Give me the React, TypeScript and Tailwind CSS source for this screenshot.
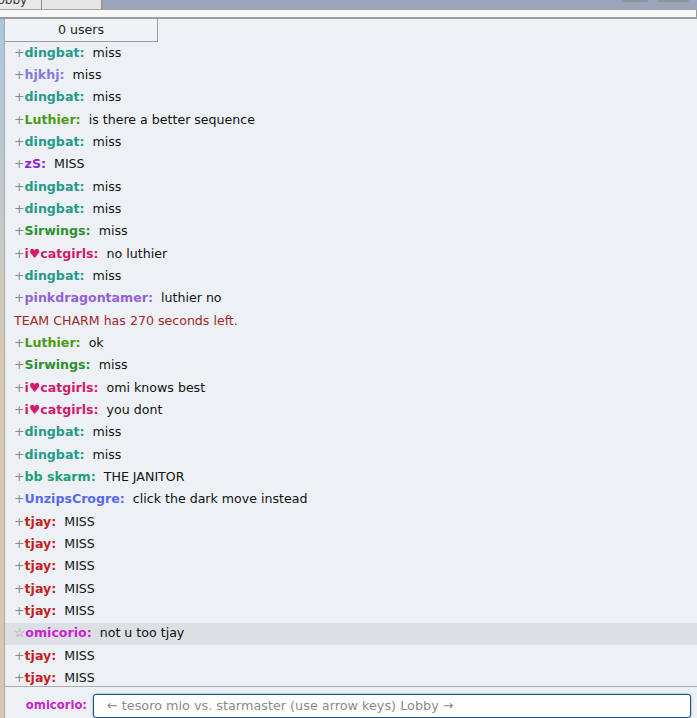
import React from 'react';

type Msg = {
  rank?: string;
  name?: string;
  color?: string;
  text: string;
  system?: boolean;
  highlight?: boolean;
};

const TEAL = 'text-[#27998a]';
const LAV = 'text-[#8579dd]';
const LUTH = 'text-[#4c9a16]';
const SIR = 'text-[#2d8f2d]';
const CAT = 'text-[#d41a6b]';
const TJAY = 'text-[#c41e1e]';

const messages: Msg[] = [
  { name: 'dingbat', color: TEAL, text: 'miss' },
  { name: 'hjkhj', color: LAV, text: 'miss' },
  { name: 'dingbat', color: TEAL, text: 'miss' },
  { name: 'Luthier', color: LUTH, text: 'is there a better sequence' },
  { name: 'dingbat', color: TEAL, text: 'miss' },
  { name: 'zS', color: 'text-[#8f25d8]', text: 'MISS' },
  { name: 'dingbat', color: TEAL, text: 'miss' },
  { name: 'dingbat', color: TEAL, text: 'miss' },
  { name: 'Sirwings', color: SIR, text: 'miss' },
  { name: 'i♥catgirls', color: CAT, text: 'no luthier' },
  { name: 'dingbat', color: TEAL, text: 'miss' },
  { name: 'pinkdragontamer', color: 'text-[#9361d6]', text: 'luthier no' },
  { text: 'TEAM CHARM has 270 seconds left.', system: true },
  { name: 'Luthier', color: LUTH, text: 'ok' },
  { name: 'Sirwings', color: SIR, text: 'miss' },
  { name: 'i♥catgirls', color: CAT, text: 'omi knows best' },
  { name: 'i♥catgirls', color: CAT, text: 'you dont' },
  { name: 'dingbat', color: TEAL, text: 'miss' },
  { name: 'dingbat', color: TEAL, text: 'miss' },
  { name: 'bb skarm', color: 'text-[#1f9f78]', text: 'THE JANITOR' },
  { name: 'UnzipsCrogre', color: 'text-[#5a68ee]', text: 'click the dark move instead' },
  { name: 'tjay', color: TJAY, text: 'MISS' },
  { name: 'tjay', color: TJAY, text: 'MISS' },
  { name: 'tjay', color: TJAY, text: 'MISS' },
  { name: 'tjay', color: TJAY, text: 'MISS' },
  { name: 'tjay', color: TJAY, text: 'MISS' },
  { rank: '☆', name: 'omicorio', color: 'text-[#cc1fd0]', text: 'not u too tjay', highlight: true },
  { name: 'tjay', color: TJAY, text: 'MISS' },
  { name: 'tjay', color: TJAY, text: 'MISS' },
  { name: 'tjay', color: TJAY, text: 'MISS' },
];

const ChatLine = ({ m }: { m: Msg }) => {
  if (m.system) {
    return (
      <div className="h-[22.33px] flex items-center pl-[9px] text-[#a3272a] whitespace-nowrap">
        {m.text}
      </div>
    );
  }
  return (
    <div
      className={`h-[22.33px] flex items-center pl-[9px] whitespace-nowrap ${m.highlight ? 'bg-[#dcdfe3]' : ''}`}
    >
      <span className="text-[#8a8a8a]">{m.rank ?? '+'}</span>
      <strong className={`font-bold ${m.color}`}>{m.name}:</strong>
      <span className="ml-[8px] text-[#111]">{m.text}</span>
    </div>
  );
};

export default function App() {
  return (
    <div
      className="w-[697px] h-[718px] overflow-hidden flex flex-col bg-[#edf1f5] text-[12.6px]"
      style={{ fontFamily: '"DejaVu Sans", Verdana, sans-serif' }}
    >
      {/* Tab bar */}
      <div className="h-[10px] flex bg-[#9aa5b9] border-b border-[#a4a4a4] relative">
        <div className="w-[42px] h-full bg-[#e9e9e9] border-r border-[#8c8c8c] text-[#333] text-[12px] leading-[6px] overflow-hidden">
          <span className="block -mt-[3px] -ml-[9px]">Lobby</span>
        </div>
        <div className="w-[60px] h-full bg-[#e6e6e6] border-r border-[#8c8c8c]" />
        <div className="flex-1" />
        <div className="absolute left-[622px] top-0 w-[26px] h-[2px] rounded-b bg-[#8b95a6]" />
        <div className="absolute left-[657px] top-0 w-[32px] h-[2px] rounded-b bg-[#8b95a6]" />
      </div>
      <div className="h-[9px] bg-[#f7f7f7] border-r border-[#9a9a9a] border-b-2 border-b-[#9d9d9d]" />

      {/* Main */}
      <div className="flex-1 flex min-h-0">
        <div className="w-[4px] bg-gradient-to-b from-[#a9c6e2] via-[#d9c9b0] to-[#d5c7b4]" />
        <div className="flex-1 flex flex-col border-l border-[#a9a9a9] min-h-0">
          <div className="flex-1 min-h-0 overflow-hidden">
            <div className="w-[153px] h-[23px] flex items-center justify-center border-r border-b border-[#9c9c9c] bg-[#f0f3f6] text-[#222]">
              0 users
            </div>
            {messages.map((m, i) => (
              <ChatLine key={i} m={m} />
            ))}
          </div>
          <div className="h-[32px] shrink-0 border-t border-[#ababab] flex items-start pt-[7px]">
            <div className="w-[88px] pr-[6px] pt-[4px] text-right font-bold text-[11.6px] leading-[14px] text-[#cc1fd0]">omicorio:</div>
            <div className="flex-1 mr-[6px] h-[24px] rounded-[3px] border border-[#1d4d87] bg-white shadow-[0_0_2px_#5b8fd0] flex items-center pl-[13px] text-[12.8px] text-[#8a8a8a] whitespace-nowrap">
              ← tesoro mio vs. starmaster (use arrow keys) Lobby →
            </div>
          </div>
        </div>
      </div>
    </div>
  );
}
